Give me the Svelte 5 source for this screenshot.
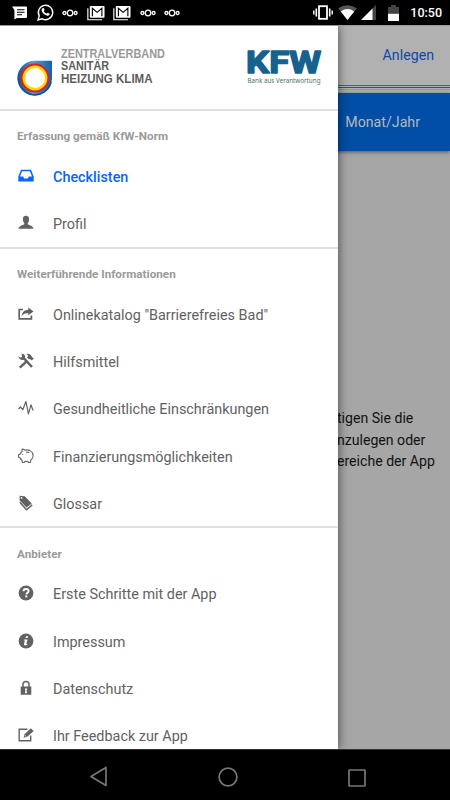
<script lang="ts">
  type Item = { icon: string; label: string; active?: boolean };
  type Group = { title: string; items: Item[] };

  const groups: Group[] = [
    {
      title: "Erfassung gemäß KfW-Norm",
      items: [
        { icon: "inbox", label: "Checklisten", active: true },
        { icon: "person", label: "Profil" },
      ],
    },
    {
      title: "Weiterführende Informationen",
      items: [
        { icon: "share", label: 'Onlinekatalog "Barrierefreies Bad"' },
        { icon: "tools", label: "Hilfsmittel" },
        { icon: "pulse", label: "Gesundheitliche Einschränkungen" },
        { icon: "piggy", label: "Finanzierungsmöglichkeiten" },
        { icon: "tags", label: "Glossar" },
      ],
    },
    {
      title: "Anbieter",
      items: [
        { icon: "help", label: "Erste Schritte mit der App" },
        { icon: "info", label: "Impressum" },
        { icon: "lock", label: "Datenschutz" },
        { icon: "edit", label: "Ihr Feedback zur App" },
      ],
    },
  ];
</script>

{#snippet dots()}
  <svg width="16" height="8" viewBox="0 0 16 8" fill="none" stroke="#fff" stroke-width="1.3">
    <circle cx="8" cy="4" r="2.8" />
    <circle cx="2.4" cy="4" r="1.5" />
    <circle cx="13.6" cy="4" r="1.5" />
  </svg>
{/snippet}

{#snippet mail()}
  <svg width="18" height="16" viewBox="0 0 19 16">
    <path d="M.9 3v12.1h15" fill="none" stroke="#fff" stroke-width="1.2" />
    <rect x="3" y="0.5" width="15.5" height="12.5" rx="1" fill="#fff" />
    <path d="M5.7 11.5V3l5 4.300 5-4.300v8.500" fill="none" stroke="#000" stroke-width="1.2" />
  </svg>
{/snippet}

<div class="phone">
  <div class="status">
    <div class="notifications">
      <svg width="16" height="14" viewBox="0 0 16 14">
        <path d="M0 0.5h14a1 1 0 0 1 1 1v9.5a1 1 0 0 1-1 1H5l-2.6 1.6V4z" fill="#fff" />
        <path d="M5 3.8h7.5M5 6.3h7.5M5 8.8h5" stroke="#000" stroke-width="1.1" />
      </svg>
      <svg width="17" height="17" viewBox="0 0 17 17">
        <path d="M1 16l1.2-4.1A7.2 7.2 0 1 1 5.1 14.8z" fill="none" stroke="#fff" stroke-width="1.4" />
        <path d="M5.5 4.3c.7-.7 1.3-.4 1.6.5l.5 1.2-.8 1.1c.7 1.4 1.6 2.1 2.8 2.7l1.1-1.1 1.9 1c.3.9-1 2.2-2.2 2-3-.6-5.6-3.2-5.8-5.6 0-.7.3-1.3.9-1.8z" fill="#fff" />
      </svg>
      {@render dots()}
      {@render mail()}
      {@render mail()}
      {@render dots()}
      {@render dots()}
    </div>
    <div class="system">
      <svg width="20" height="15" viewBox="0 0 20 15" fill="none" stroke="#fff">
        <rect x="6" y="1.2" width="8" height="12.6" stroke-width="1.8" />
        <path d="M3.3 3.5v8M16.7 3.5v8" stroke-width="1.6" />
        <path d="M.8 5.5v4M19.2 5.5v4" stroke-width="1.4" />
      </svg>
      <svg class="wifi" width="19" height="15" viewBox="0 0 19 15">
        <path d="M.2 3.3Q9.5-3 18.8 3.3L9.5 15z" fill="#555" />
        <path d="M2.8 6.4Q9.5 1.5 16.2 6.4L9.5 15z" fill="#fff" />
      </svg>
      <svg class="signal" width="15" height="15" viewBox="0 0 15 15">
        <path d="M0 15L15 0v15z" fill="#444" />
        <path d="M0 15L11.5 3.5V15z" fill="#fff" />
      </svg>
      <svg class="battery" width="11" height="16" viewBox="0 0 11 16">
        <path d="M0 2h3V0h5v2h3v7H0z" fill="#444" />
        <path d="M0 8.8h11V16H0z" fill="#fff" />
      </svg>
      <span class="clock">10:50</span>
    </div>
  </div>

  <div class="screen">
    <div class="page">
      <div class="toolbar">Anlegen</div>
      <div class="stripes"></div>
      <div class="tab">Monat/Jahr</div>
      <div class="hint">
        <div>tigen Sie die</div>
        <div>nzulegen oder</div>
        <div>ereiche der App</div>
      </div>
    </div>

    <div class="drawer">
      <div class="brand">
        <svg class="zv-mark" width="36" height="36" viewBox="0 0 36 36">
          <defs>
            <linearGradient id="drop" x1="0" y1="0" x2="1" y2="0">
              <stop offset="0" stop-color="#0a5594" />
              <stop offset="0.45" stop-color="#5f9cca" />
              <stop offset="1" stop-color="#0d65a8" />
            </linearGradient>
          </defs>
          <path d="M18 .8h17V18A17.3 17.3 0 1 1 18 .8z" fill="url(#drop)" />
          <path d="M1.6 18A16.4 16.4 0 0 0 34 22" fill="none" stroke="#0a5594" stroke-width="1.6" />
          <circle cx="18" cy="18" r="14.6" fill="#d81f2a" />
          <circle cx="18" cy="18" r="12.4" fill="#ffd800" />
          <circle cx="18" cy="18" r="10" fill="#fff" />
        </svg>
        <svg class="zv-name" width="106" height="38" viewBox="0 0 106 38">
          <text x="0" y="10.5" textLength="104" lengthAdjust="spacingAndGlyphs" fill="#999">ZENTRALVERBAND</text>
          <text x="0" y="23.2" textLength="48" lengthAdjust="spacingAndGlyphs" fill="#5c5c5c">SANITÄR</text>
          <text x="0" y="36" textLength="91.5" lengthAdjust="spacingAndGlyphs" fill="#5c5c5c">HEIZUNG KLIMA</text>
        </svg>
        <svg class="kfw" width="76" height="40" viewBox="0 0 76 40">
          <text class="kfw-name" x="-1" y="25.5" textLength="75" lengthAdjust="spacingAndGlyphs">KFW</text>
          <text class="kfw-claim" x="0.5" y="36" textLength="73" lengthAdjust="spacingAndGlyphs">Bank aus Verantwortung</text>
        </svg>
      </div>

      {#each groups as group}
        <div class="group">
          <div class="title">{group.title}</div>
          {#each group.items as item}
            <div class="item" class:active={item.active}>
              <svg class="icon" width="16" height="16" viewBox="0 0 16 16" fill="currentColor">
                {#if item.icon === "inbox"}
                  <path fill-rule="evenodd" d="M3 1.8h10l2.700 6.800v5H.3v-5zM4.100 3.300L2 8.600h3.200l1 2h3.600l1-2H14l-2.100-5.300z" />
                {:else if item.icon === "person"}
                  <path d="M8 .8c2.200 0 3.300 1.500 3.100 3.600-.1 1.700-.7 2.900-1.400 3.600v1.300c1.200.9 5.600 1.500 5.800 4.500H.5c.2-3 4.600-3.600 5.800-4.500V8C5.600 7.300 5 6.100 4.900 4.400 4.700 2.300 5.800.8 8 .8z" />
                {:else if item.icon === "share"}
                  <path d="M5 3.500H1.200v9.300h12.200V9.400" fill="none" stroke="currentColor" stroke-width="1.700" />
                  <path d="M10.300 1.500L15.600 5.500l-5.300 3.800V7.200C7.200 7.100 5.500 7.700 3.800 9.800c.3-3.600 2.500-6 6.500-6.100z" />
                {:else if item.icon === "tools"}
                  <path d="M1.800 14.600L9.400 7.600M6 5.300l8 8.700" fill="none" stroke="currentColor" stroke-width="2.500" />
                  <path d="M.3 3.300l2.300 1.400 1.400-1L3.600.8c2.400-.1 3.800 1.400 3.500 3.700L5.200 6.900C2.700 7.300.4 5.600.3 3.300z" />
                  <path d="M8.300.9C11 .1 13.400 1.400 14 4l1.700 1.600-1.800 2-2-1.600-1 .2L9 4.500l1-1C10.300 2.300 9.500 1.500 8.300.9z" />
                {:else if item.icon === "pulse"}
                  <path d="M.5 9l1.900-2 2.400 2.700L7.900 1.500l2.500 12.300 2.600-9 2.100 5.800" fill="none" stroke="currentColor" stroke-width="1.200" stroke-linejoin="round" />
                {:else if item.icon === "piggy"}
                  <path d="M4.300 3.300C3.900 2.300 4 1.500 4.200 1c1.200 0 2.100.5 2.800 1.200 4-1.200 7.900 1.300 8.100 5.200.1 2.100-.8 3.700-2.300 4.800l-.4 2.300h-2l-.6-1.200c-1 .2-2 .2-2.800 0l-.6 1.200H4.300L4 12.300c-.8-.6-1.400-1.400-1.700-2.300L.6 9.200V6.500l1.500-.4c.4-1.200 1.200-2.100 2.200-2.800zM8 4.300c1.300-.3 2.300-.2 3.300.3" fill="none" stroke="currentColor" stroke-width="1.100" stroke-linejoin="round" />
                  <circle cx="4.700" cy="6.300" r=".5" />
                {:else if item.icon === "tags"}
                  <path fill-rule="evenodd" d="M1.600.8l5.200.4 6.900 7.200-5.200 4.100L1.600 5.500zM3.600 2a.9.9 0 1 0 0 1.800.9.9 0 0 0 0-1.800z" />
                  <path d="M1.800 7.200l6.700 7.600 5.700-4.900" fill="none" stroke="currentColor" stroke-width="1.400" />
                {:else if item.icon === "help"}
                  <circle cx="8" cy="8" r="7.400" />
                  <path d="M5.500 6.300C5.500 4.600 6.500 4 8 4c1.600 0 2.600.7 2.600 2 0 1.700-2 1.700-2.200 3.300" fill="none" stroke="#fff" stroke-width="1.900" />
                  <path d="M7.300 10.400h2v1.900h-2z" fill="#fff" />
                {:else if item.icon === "info"}
                  <circle cx="8" cy="8" r="7.400" />
                  <path d="M8 3.200h2.200l-.5 1.900H7.500zM6 6.400h3.500l-1.200 4.700 1.200-.3-.3 1c-1.500.9-3.500 1-3.200-.5l.9-3.700H5.800z" fill="#fff" />
                {:else if item.icon === "lock"}
                  <path fill-rule="evenodd" d="M2.700 6.500h10.600v8.300H2.700zM7 9.300l.4 1-.4 2.900h2l-.4-2.900.4-1c0-1.400-2-1.400-2 0z" />
                  <path d="M5 7V4.300c0-3.700 6-3.700 6 0V7" fill="none" stroke="currentColor" stroke-width="1.500" />
                {:else}
                  <path d="M9.500 2.200H1.200v11.600h11.500V8.500" fill="none" stroke="currentColor" stroke-width="1.400" />
                  <path d="M5.600 10.700l.9-3.500 6.300-6L15.700 4 9.300 9.700z" />
                  <path d="M6.800 8.200l1.600 1.500" stroke="#fff" stroke-width=".8" />
                {/if}
              </svg>
              <span>{item.label}</span>
            </div>
          {/each}
        </div>
      {/each}
    </div>
  </div>

  <div class="navbar">
    <svg width="18" height="21" viewBox="0 0 18 21" fill="none" stroke="#777" stroke-width="1.7">
      <path d="M1 10.5L16 1.5v18z" stroke-linejoin="round" />
    </svg>
    <svg width="20" height="20" viewBox="0 0 20 20" fill="none" stroke="#777" stroke-width="1.7">
      <circle cx="10" cy="10" r="8.9" />
    </svg>
    <svg class="recent" width="18" height="18" viewBox="0 0 18 18" fill="none" stroke="#777" stroke-width="1.7">
      <rect x="1" y="1" width="16" height="16" rx=".5" />
    </svg>
  </div>
</div>

<style>
  :global(body) {
    margin: 0;
    background: #000;
  }

  svg {
    display: block;
    flex: none;
    overflow: visible;
  }

  .phone {
    display: flex;
    flex-direction: column;
    width: 450px;
    height: 800px;
    overflow: hidden;
    background: #000;
    font-family: Roboto, sans-serif;
  }

  .status {
    display: flex;
    justify-content: space-between;
    height: 25px;
    box-sizing: border-box;
    padding: 0 8px 0 12px;
    color: #fff;
  }

  .notifications,
  .system {
    display: flex;
    align-items: center;
  }

  .notifications {
    gap: 8.5px;
  }

  .wifi {
    margin-left: 5px;
  }

  .signal {
    margin-left: 4px;
  }

  .battery {
    margin-left: 12px;
  }

  .clock {
    margin-left: 11px;
    font-size: 12.5px;
    font-weight: 500;
    line-height: 27px;
  }

  .screen {
    position: relative;
    height: 724px;
    box-sizing: border-box;
    border-top: 1px solid #999;
    overflow: hidden;
  }

  .page {
    height: 100%;
    background: #a6a6a6;
  }

  .toolbar {
    height: 59px;
    padding-right: 16px;
    background: #b1b1b1;
    color: #0a4aa8;
    font-size: 14.2px;
    line-height: 58px;
    text-align: right;
  }

  .stripes {
    height: 8px;
    background: linear-gradient(
      #2d6d83 0 1px,
      #b1b1b1 1px 2px,
      #a32b2b 2px 3px,
      #b1b1b1 3px 4px,
      #b39b3c 4px 5px,
      #b1b1b1 5px
    );
  }

  .tab {
    height: 58px;
    padding-right: 30px;
    background: #004ea6;
    box-shadow: 0 1px 4px rgba(0, 0, 0, 0.5);
    color: #b5b9c0;
    font-size: 14.2px;
    line-height: 58px;
    text-align: right;
  }

  .hint {
    padding: 257px 0 0 337px;
    color: #111;
    font-size: 14.1px;
    line-height: 21.6px;
    white-space: nowrap;
  }

  .drawer {
    position: absolute;
    top: 0;
    bottom: 0;
    left: 0;
    width: 338px;
    overflow: hidden;
    background: #fff;
    box-shadow: 0 0 10px rgba(0, 0, 0, 0.6);
  }

  .brand {
    display: flex;
    align-items: flex-start;
    height: 82.6px;
    box-sizing: border-box;
    padding: 21px 0 0 17px;
  }

  .zv-mark {
    margin-top: 13px;
  }

  .zv-name {
    margin-left: 8px;
    font-family: "Liberation Sans", sans-serif;
    font-size: 12.5px;
    font-weight: 700;
  }

  .kfw {
    margin-left: 80px;
  }

  .kfw-name {
    fill: #17618f;
    stroke: #17618f;
    stroke-width: 1.5;
    stroke-linejoin: round;
    font-family: Roboto, sans-serif;
    font-size: 32px;
    font-weight: 700;
  }

  .kfw-claim {
    fill: #4f7168;
    font-family: "Noto Sans", sans-serif;
    font-size: 7px;
  }

  .title {
    height: 43.4px;
    box-sizing: border-box;
    padding: 17.5px 0 0 17px;
    border-top: 2px solid #e0e0e0;
    color: #9a9a9a;
    font-size: 11.7px;
    font-weight: 700;
    line-height: 16px;
  }

  .item {
    display: flex;
    align-items: center;
    height: 47.3px;
    box-sizing: border-box;
    padding: 3px 0 0 18px;
    color: #626262;
    font-size: 14.4px;
  }

  .item span {
    margin-left: 19px;
    white-space: nowrap;
  }

  .active {
    color: #0a66f5;
    font-weight: 500;
  }

  .icon {
    margin-top: -3px;
  }

  .navbar {
    display: flex;
    align-items: center;
    justify-content: space-between;
    height: 51px;
    box-sizing: border-box;
    padding: 3px 84px 0 90px;
    border-top: 1px solid #333;
  }

  .recent {
    margin-top: 3px;
  }
</style>
